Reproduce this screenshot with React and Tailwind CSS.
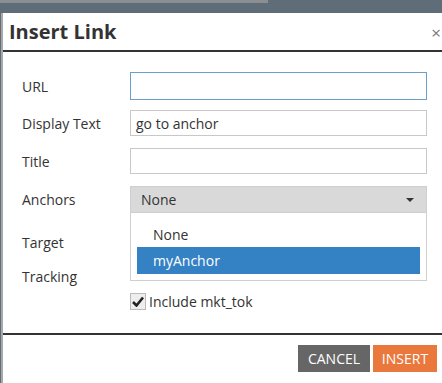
import React from "react";

const labelCls = "w-[127px] shrink-0 pl-[19px] text-[14px] text-[#333]";

const Row = ({ label, className, children }) => (
  <div className={`flex items-center ${className}`}>
    <div className={labelCls}>{label}</div>
    {children}
  </div>
);

export default function App() {
  return (
    <div className="relative w-[442px] h-[383px] overflow-hidden bg-[#5e6d77] font-['Open_Sans',sans-serif]">
      {/* backdrop strip */}
      <div className="h-[3px] w-[268px] bg-[#8b8f92]" />
      <div className="h-[10px]" />

      {/* dialog */}
      <div className="ml-[1px] h-[370px] bg-white border-l-2 border-[#a8a8a8]">
        {/* header */}
        <div className="relative h-[39px] border-b-2 border-[#333] pl-[6px] flex items-center">
          <span className="text-[20px] font-bold text-[#333] leading-none">Insert Link</span>
          <span className="absolute right-[1px] top-[11px] text-[17px] leading-none text-[#777]">×</span>
        </div>

        {/* form */}
        <div className="flex flex-col">
          <Row label="URL" className="mt-[20px] h-[28px]">
            <div className="w-[297px] h-[28px] border border-[#6aa0c7]" />
          </Row>
          <Row label="Display Text" className="mt-[10px] h-[26px]">
            <div className="w-[297px] h-[26px] border border-[#c8c8c8] pl-[5px] flex items-center text-[14px] text-[#333]">
              go to anchor
            </div>
          </Row>
          <Row label="Title" className="mt-[12px] h-[26px]">
            <div className="w-[297px] h-[26px] border border-[#c8c8c8]" />
          </Row>
          <Row label="Anchors" className="mt-[12px] h-[27px]">
            <div className="relative w-[297px] h-[27px]">
              <div className="h-full bg-[#d9d9d9] border border-[#cfcfcf] pl-[10px] pr-[12px] flex items-center justify-between text-[14px] text-[#333]">
                <span>None</span>
                <span className="w-0 h-0 border-l-[4px] border-r-[4px] border-t-[4px] border-l-transparent border-r-transparent border-t-[#333]" />
              </div>
              {/* dropdown menu */}
              <div className="absolute left-0 top-full z-10 w-[297px] h-[68px] bg-white border border-[#cfcfcf] border-t-0 px-[6px] pt-[8px]">
                <div className="h-[26px] pl-[16px] flex items-center text-[14px] text-[#333]">None</div>
                <div className="h-[27px] pl-[16px] flex items-center text-[14px] text-white bg-[#3481c4]">myAnchor</div>
              </div>
            </div>
          </Row>
          <Row label="Target" className="mt-[16px] h-[26px]" />
          <Row label="Tracking" className="mt-[8px] h-[26px]" />
          <div className="mt-[4px] h-[17px] pl-[127px] flex items-center">
            <div className="w-[16px] h-[17px] border border-[#bbb] bg-[#eee] flex items-center justify-center">
              <svg width="12" height="11" viewBox="0 0 12 11">
                <path d="M1 6 L4.5 9.5 L11 1.5" fill="none" stroke="#222" strokeWidth="2.6" />
              </svg>
            </div>
            <span className="ml-[3px] text-[14px] text-[#333]">Include mkt_tok</span>
          </div>
        </div>

        {/* footer */}
        <div className="mt-[23px] border-t-2 border-[#333]" />
        <div className="mt-[10px] flex justify-end pr-[5px] gap-[3px]">
          <button className="w-[72px] h-[27px] bg-[#666] text-white text-[14px]">CANCEL</button>
          <button className="w-[64px] h-[27px] bg-[#ea773c] text-white text-[14px]">INSERT</button>
        </div>
      </div>
    </div>
  );
}
